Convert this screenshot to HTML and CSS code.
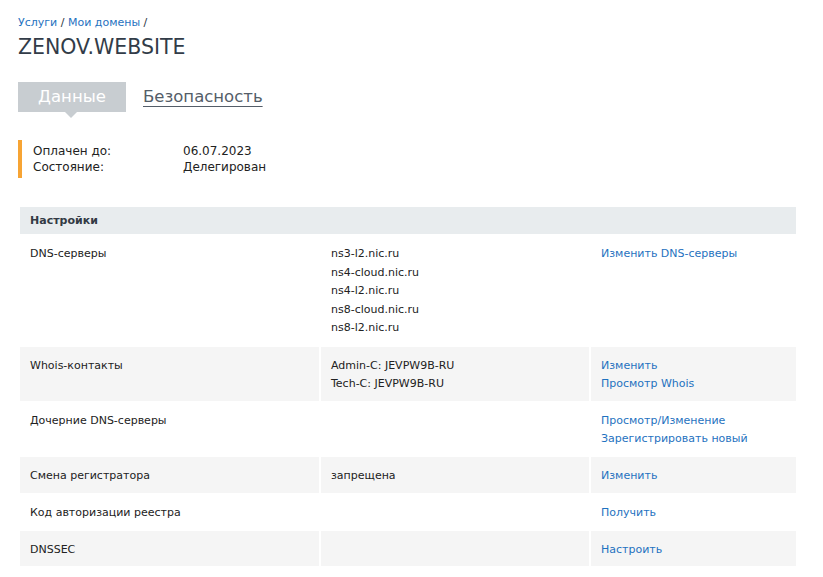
FILE: index.html
```html
<!DOCTYPE html>
<html lang="ru">
<head>
<meta charset="utf-8">
<title>ZENOV.WEBSITE</title>
<link rel="stylesheet" href="styles.css">
</head>
<body>
<div class="page">
  <div class="breadcrumb"><a href="#">Услуги</a> / <a href="#">Мои домены</a> /</div>
  <h1 class="title">ZENOV.WEBSITE</h1>
  <div class="tabs">
    <div class="tab tab-active">Данные</div>
    <a class="tab tab-link" href="#">Безопасность</a>
  </div>
  <div class="info">
    <div class="info-row"><span class="info-label">Оплачен до:</span><span>06.07.2023</span></div>
    <div class="info-row"><span class="info-label">Состояние:</span><span>Делегирован</span></div>
  </div>
  <table class="settings">
    <colgroup><col class="c1"><col class="c2"><col class="c3"></colgroup>
    <thead>
      <tr><th colspan="3">Настройки</th></tr>
    </thead>
    <tbody>
      <tr class="row-tall">
        <td>DNS-серверы</td>
        <td class="ns"><div>ns3-l2.nic.ru</div><div>ns4-cloud.nic.ru</div><div>ns4-l2.nic.ru</div><div>ns8-cloud.nic.ru</div><div>ns8-l2.nic.ru</div></td>
        <td><a href="#">Изменить DNS-серверы</a></td>
      </tr>
      <tr class="grey">
        <td>Whois-контакты</td>
        <td><div>Admin-C: JEVPW9B-RU</div><div>Tech-C: JEVPW9B-RU</div></td>
        <td><div><a href="#">Изменить</a></div><div><a href="#">Просмотр Whois</a></div></td>
      </tr>
      <tr class="row-tall">
        <td>Дочерние DNS-серверы</td>
        <td></td>
        <td><div><a href="#">Просмотр/Изменение</a></div><div><a href="#">Зарегистрировать новый</a></div></td>
      </tr>
      <tr class="grey row-single">
        <td>Смена регистратора</td>
        <td>запрещена</td>
        <td><a href="#">Изменить</a></td>
      </tr>
      <tr class="row-tall">
        <td>Код авторизации реестра</td>
        <td></td>
        <td><a href="#">Получить</a></td>
      </tr>
      <tr class="grey row-short">
        <td>DNSSEC</td>
        <td></td>
        <td><a href="#">Настроить</a></td>
      </tr>
    </tbody>
  </table>
</div>
</body>
</html>
```

FILE: styles.css
```css
html, body {
  margin: 0;
  padding: 0;
  background: #ffffff;
}

body {
  font-family: "DejaVu Sans", Verdana, sans-serif;
  font-size: 11px;
  color: #222222;
}

a {
  color: #1f72c0;
  text-decoration: none;
}

.page {
  padding: 15px 0 0 18px;
  width: 780px;
}

.breadcrumb {
  line-height: 16px;
  color: #2a3440;
}

.title {
  margin: 4px 0 0;
  font-size: 20.5px;
  line-height: 24px;
  font-weight: normal;
  color: #323c48;
}

.tabs {
  margin-top: 23px;
  display: flex;
  align-items: flex-start;
  gap: 17px;
  height: 30px;
}

.tab {
  font-size: 16.5px;
  line-height: 30px;
}

.tab-active {
  position: relative;
  width: 108px;
  height: 30px;
  background: #c8cdd1;
  color: #ffffff;
  text-align: center;
}

.tab-active::after {
  content: "";
  position: absolute;
  left: 47px;
  top: 30px;
  border-left: 6px solid transparent;
  border-right: 6px solid transparent;
  border-top: 6px solid #c8cdd1;
}

.tab-link {
  color: #545d68;
  text-decoration: underline;
  text-decoration-color: #545d68;
  text-underline-offset: 4px;
}

.info {
  margin-top: 28px;
  border-left: 4px solid #f7a434;
  padding: 3px 0 3px 11px;
  font-size: 12px;
}

.info-row {
  display: flex;
  line-height: 16px;
}

.info-label {
  width: 150px;
}

.settings {
  margin-top: 29px;
  width: 780px;
  border-collapse: separate;
  border-spacing: 2px 0;
  table-layout: fixed;
  line-height: 18px;
}

.c1 { width: 299px; }
.c2 { width: 268px; }

.settings th {
  height: 27px;
  padding: 0 10px;
  background: #e8ecee;
  text-align: left;
  font-weight: bold;
  color: #333a44;
}

.settings td {
  padding: 10px 10px 8px;
  vertical-align: top;
}

.settings tr.grey td {
  background: #f5f5f5;
}

.settings td.ns {
  line-height: 18.5px;
}

.settings tr.row-tall td {
  padding-top: 11px;
  padding-bottom: 9px;
}

.settings tr.row-single td {
  padding-top: 10px;
  padding-bottom: 8px;
}

.settings tr.row-short td {
  padding-top: 10px;
  padding-bottom: 7px;
}
```
